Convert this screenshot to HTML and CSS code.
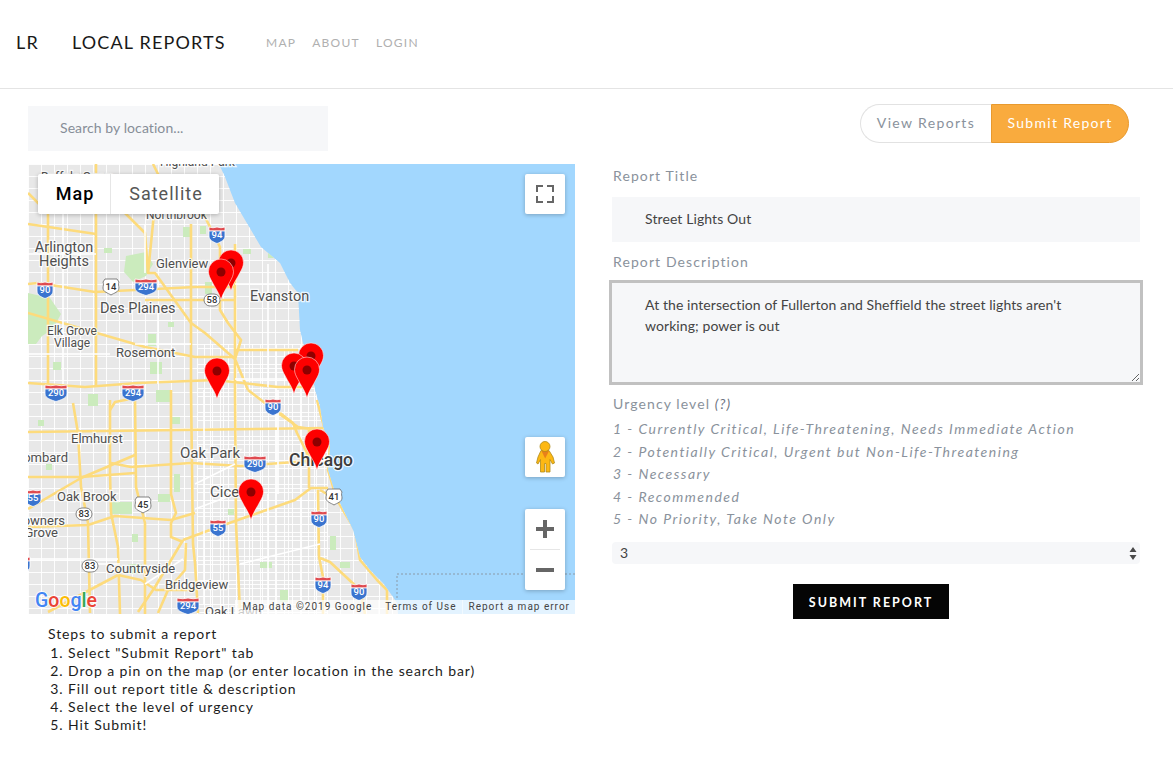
FILE: index.html
```html
<!DOCTYPE html>
<html lang="en">
<head>
<meta charset="utf-8">
<title>Local Reports</title>
<link rel="stylesheet" href="styles.css">
</head>
<body>
<header class="topbar">
  <span class="brand-mark">LR</span>
  <span class="brand-name">LOCAL REPORTS</span>
  <nav class="nav">
    <a class="nav-link">MAP</a>
    <a class="nav-link">ABOUT</a>
    <a class="nav-link">LOGIN</a>
  </nav>
</header>
<main class="content">
  <section class="left">
    <input class="search" type="text" placeholder="Search by location...">
    <div class="map">
      <svg class="map-canvas" viewBox="0 0 547 450" width="547" height="450" xmlns="http://www.w3.org/2000/svg">
        <defs>
          <pattern id="grid" width="13" height="12" patternUnits="userSpaceOnUse">
            <path d="M0 .5H13M.5 0V12" class="street-fine"/>
          </pattern>
          <pattern id="gridcity" width="8" height="8" patternUnits="userSpaceOnUse">
            <path d="M0 .5H8M.5 0V8" class="street-fine"/>
          </pattern>
          <clipPath id="landclip">
            <path d="M0 0H191L197 13L207 39L233 83L252 99L262 119L270 129L272 166L275 179L282 200L287 226L292 243L295 263L302 283L300 306L307 329L325 366L332 393L342 406L355 419L365 433L369 439L370 450H0Z"/>
          </clipPath>
          <symbol id="pin" viewBox="-1 -1 27 43" overflow="visible">
            <path class="pin-body" d="M12.5 41C11 34 6 28 3.5 22.5C1.5 19 0 16 0 12.5A12.5 12.5 0 1 1 25 12.5C25 16 23.5 19 21.5 22.5C19 28 14 34 12.5 41Z"/>
            <circle class="pin-dot" cx="12.5" cy="13" r="4.5"/>
          </symbol>
          <g id="i2">
            <path class="shield-red" d="M-8 -8Q-4 -6.5 0 -8Q4 -6.5 8 -8V-4H-8Z"/>
            <path class="shield-blue" d="M-8 -4H8V1C8 5 4 7 0 8.5C-4 7 -8 5 -8 1Z"/>
          </g>
          <g id="i3">
            <path class="shield-red" d="M-11 -8Q-5 -6.5 0 -8Q5 -6.5 11 -8V-4H-11Z"/>
            <path class="shield-blue" d="M-11 -4H11V1C11 5 5 7 0 8.5C-5 7 -11 5 -11 1Z"/>
          </g>
          <path id="us" class="shield-us" d="M-6 -8H6L8 -5C7 -3 8 -1 8 1C8 5 3 6 0 8C-3 6 -8 5 -8 1C-8 -1 -7 -3 -8 -5Z"/>
          <rect id="st" class="shield-us" x="-8" y="-6" width="16" height="12" rx="6"/>
        </defs>
        <rect class="water" width="547" height="450"/>
        <g clip-path="url(#landclip)">
          <rect class="land" width="547" height="450"/>
          <rect width="370" height="450" fill="url(#grid)"/>
          <rect x="170" y="180" width="130" height="270" fill="url(#gridcity)"/>
          <g class="park">
            <path d="M0 129L22 134L33 150L25 165L14 172L8 180H0Z"/>
            <path d="M98 92L118 88L125 100L118 112L105 118L96 108Z"/>
            <rect x="155" y="63" width="8" height="10"/>
            <rect x="172" y="62" width="6" height="8"/>
            <rect x="215" y="85" width="8" height="5"/>
            <rect x="76" y="84" width="8" height="5"/>
            <rect x="120" y="170" width="8" height="12"/>
            <rect x="140" y="158" width="6" height="5"/>
            <rect x="177" y="118" width="7" height="12"/>
            <rect x="195" y="110" width="10" height="6"/>
            <rect x="25" y="198" width="8" height="8"/>
            <rect x="122" y="198" width="12" height="12"/>
            <rect x="60" y="230" width="10" height="12"/>
            <rect x="128" y="226" width="14" height="12"/>
            <rect x="144" y="253" width="8" height="7"/>
            <rect x="84" y="338" width="20" height="12"/>
            <rect x="130" y="330" width="12" height="8"/>
            <rect x="146" y="310" width="6" height="18"/>
            <rect x="10" y="256" width="6" height="6"/>
            <rect x="18" y="300" width="6" height="6"/>
            <rect x="232" y="398" width="12" height="6"/>
            <rect x="252" y="426" width="8" height="12"/>
            <rect x="302" y="372" width="6" height="14"/>
            <rect x="312" y="398" width="10" height="6"/>
            <rect x="104" y="370" width="6" height="8"/>
            <rect x="100" y="400" width="14" height="10"/>
            <rect x="200" y="345" width="6" height="6"/>
            <rect x="272" y="150" width="6" height="5"/>
            <rect x="240" y="88" width="10" height="6"/>
          </g>
          <g class="road">
            <path d="M0 268L297 264"/>
            <path d="M0 345L53 314L107 291"/>
            <path d="M83 299L103 303L163 299L213 302L267 298L293 296"/>
            <path d="M0 313H53L107 309"/>
            <path d="M45 239L50 269L53 323L60 359L62 449"/>
            <path d="M82 236V309L83 349L90 383L92 450"/>
            <path d="M82 246L87 238L107 234L108 323L117 359V450"/>
            <path d="M143 226V330L148 349L143 359V373L155 378"/>
            <path d="M163 60V226L165 380L167 399L170 449"/>
            <path d="M207 80V226L208 359L212 449"/>
            <path d="M0 363L60 361L87 352L143 356L167 349"/>
            <path d="M155 376L190 363L267 336L283 324H300"/>
            <path d="M155 376L127 423L110 448"/>
            <path d="M20 448L90 411L113 416L128 426H167"/>
            <path d="M158 379L157 406L140 426L130 449"/>
            <path d="M281 266V324"/>
            <path d="M290 326L291 393L295 413V450"/>
            <path d="M292 394L302 398L332 426L337 450"/>
            <path d="M292 326L309 336L327 366L332 396L349 416L359 426V450"/>
            <path d="M289 236L295 259L302 283L300 306L309 336"/>
            <path d="M220 226L250 249L270 263L290 266"/>
            <path d="M252 249L265 259L269 269L279 289L280 300"/>
            <path d="M97 49L117 69L120 109L127 109L163 159L177 169L207 195L220 226"/>
            <path d="M0 120L10 119L67 128L167 123H207"/>
            <path d="M117 136H207"/>
            <path d="M207 186H270"/>
            <path d="M0 149L117 183L167 193H207"/>
            <path d="M68 0V223"/>
            <path d="M20 49V226"/>
            <path d="M0 29L20 49"/>
            <path d="M163 13L177 53L192 83V146L200 159L213 176L207 195"/>
            <path d="M0 219L57 223L110 219L187 216L250 223L278 223"/>
            <path d="M120 109L130 10L125 0"/>
            <path d="M0 60L68 70"/>
          </g>
          <g class="street">
            <path d="M0 90H68M0 190H82M107 180H163M207 120L270 120M207 215H260M0 395H90M167 320L207 300M167 345L207 330M212 400L292 380M117 420L155 395M60 400H92"/>
            <path d="M117 60V109M35 49V220M130 140V220M240 100V223M250 226V330M176 226V440M240 330V450"/>
          </g>
        </g>
        <path class="boundary" d="M547 410H369V436"/>
        <g class="place">
          <text class="s12" x="132" y="2">Highland Park</text>
          <text class="s12" x="13" y="17">Buffalo Grove</text>
          <text class="s12" x="118" y="55">Northbrook</text>
          <text class="s14 mid" x="36" y="88">Arlington</text>
          <text class="s14 mid" x="36" y="102">Heights</text>
          <text class="s13" x="128" y="104">Glenview</text>
          <text class="s14" x="222" y="137">Evanston</text>
          <text class="s14" x="72" y="149">Des Plaines</text>
          <text class="s12 mid" x="44" y="171">Elk Grove</text>
          <text class="s12 mid" x="44" y="183">Village</text>
          <text class="s13" x="88" y="193">Rosemont</text>
          <text class="s13" x="43" y="279">Elmhurst</text>
          <text class="s13 end" x="40" y="298">Lombard</text>
          <text class="s15" x="152" y="294">Oak Park</text>
          <text class="s15" x="182" y="333">Cicero</text>
          <text class="s13" x="29" y="337">Oak Brook</text>
          <text class="s13 end" x="37" y="361">Downers</text>
          <text class="s13 end" x="30" y="373">Grove</text>
          <text class="s13" x="78" y="409">Countryside</text>
          <text class="s13" x="137" y="425">Bridgeview</text>
          <text class="s13" x="177" y="452">Oak Lawn</text>
          <text class="s17" x="261" y="302">Chicago</text>
        </g>
        <g class="shields">
          <use href="#i2" x="189" y="71"/><text x="189" y="74">94</text>
          <use href="#i2" x="17" y="126"/><text x="17" y="129">90</text>
          <use href="#i3" x="118" y="123"/><text x="118" y="126">294</text>
          <use href="#us" x="83" y="123"/><text class="dark" x="83" y="126">14</text>
          <use href="#st" x="184" y="136"/><text class="dark" x="184" y="139">58</text>
          <use href="#i3" x="28" y="229"/><text x="28" y="232">290</text>
          <use href="#i3" x="105" y="229"/><text x="105" y="232">294</text>
          <use href="#i2" x="245" y="243"/><text x="245" y="246">90</text>
          <use href="#i3" x="227" y="300"/><text x="227" y="303">290</text>
          <use href="#i2" x="5" y="334"/><text x="5" y="337">55</text>
          <use href="#i2" x="190" y="364"/><text x="190" y="367">55</text>
          <use href="#us" x="115" y="341"/><text class="dark" x="115" y="344">45</text>
          <use href="#st" x="56" y="350"/><text class="dark" x="56" y="353">83</text>
          <use href="#st" x="62" y="402"/><text class="dark" x="62" y="405">83</text>
          <use href="#i3" x="160" y="442"/><text x="160" y="445">294</text>
          <use href="#i2" x="291" y="355"/><text x="291" y="358">90</text>
          <use href="#i2" x="295" y="421"/><text x="295" y="424">94</text>
          <use href="#i2" x="331" y="428"/><text x="331" y="431">90</text>
          <use href="#us" x="306" y="333"/><text class="dark" x="306" y="336">41</text>
          <use href="#i2" x="-6" y="401"/>
        </g>
        <use href="#pin" x="189.5" y="85" width="27" height="43"/>
        <use href="#pin" x="179.5" y="94" width="27" height="43"/>
        <use href="#pin" x="175.5" y="193" width="27" height="43"/>
        <use href="#pin" x="269.5" y="178" width="27" height="43"/>
        <use href="#pin" x="252.5" y="188" width="27" height="43"/>
        <use href="#pin" x="265.5" y="192" width="27" height="43"/>
        <use href="#pin" x="275.5" y="264" width="27" height="43"/>
        <use href="#pin" x="209.5" y="314" width="27" height="43"/>
        <text class="google" x="7" y="443"><tspan class="g-blue">G</tspan><tspan class="g-red">o</tspan><tspan class="g-yellow">o</tspan><tspan class="g-blue">g</tspan><tspan class="g-green">l</tspan><tspan class="g-red">e</tspan></text>
      </svg>

      <div class="map-type">
        <span class="map-type-btn is-on">Map</span>
        <span class="map-type-btn">Satellite</span>
      </div>
      <button class="ctl ctl-full" aria-label="Toggle fullscreen">
        <svg width="40" height="40" viewBox="0 0 40 40"><path class="ctl-line" d="M12 18V12H18M22 12H28V18M28 22V28H22M18 28H12V22"/></svg>
      </button>
      <button class="ctl ctl-peg" aria-label="Street View">
        <svg width="40" height="40" viewBox="0 0 40 40">
          <path class="peg-body" d="M16 13.5H24L28 20L29.5 26L27.5 27L25 22.5V35H21V26.5H19.5V35H15.5V22.5L13 27L11.5 26L13 20Z"/>
          <path class="peg-vest" d="M16.5 14H24L20.2 21.5Z"/>
          <circle class="peg-body" cx="20" cy="9.5" r="5"/>
        </svg>
      </button>
      <div class="ctl ctl-zoom">
        <svg width="40" height="81" viewBox="0 0 40 81">
          <path class="zoom-line" d="M11 20H29M20 11V29M11 61H29"/>
          <path class="zoom-sep" d="M5 40.5H35"/>
        </svg>
      </div>
      <div class="attr">
        <span class="attr-item attr-data">Map data ©2019 Google</span>
        <span class="attr-item attr-terms">Terms of Use</span>
        <span class="attr-item attr-error">Report a map error</span>
      </div>
    </div>
    <div class="steps">
      <div>Steps to submit a report</div>
      <ol class="steps-list">
        <li>Select "Submit Report" tab</li>
        <li>Drop a pin on the map (or enter location in the search bar)</li>
        <li>Fill out report title &amp; description</li>
        <li>Select the level of urgency</li>
        <li>Hit Submit!</li>
      </ol>
    </div>
  </section>
  <section class="right">
    <div class="toggle-row">
      <div class="toggle">
        <button class="toggle-btn">View Reports</button>
        <button class="toggle-btn is-active">Submit Report</button>
      </div>
    </div>
    <form class="form">
      <label class="label label-title">Report Title</label>
      <input class="field" type="text" value="Street Lights Out">
      <label class="label label-desc">Report Description</label>
      <textarea class="area">At the intersection of Fullerton and Sheffield the street lights aren't working; power is out</textarea>
      <label class="label label-urg">Urgency level <em>(?)</em></label>
      <ul class="levels">
        <li>1 - Currently Critical, Life-Threatening, Needs Immediate Action</li>
        <li>2 - Potentially Critical, Urgent but Non-Life-Threatening</li>
        <li>3 - Necessary</li>
        <li>4 - Recommended</li>
        <li>5 - No Priority, Take Note Only</li>
      </ul>
      <div class="select-wrap">
        <select class="select">
          <option>1</option><option>2</option><option selected>3</option><option>4</option><option>5</option>
        </select>
        <svg class="select-arrows" width="8" height="13" viewBox="0 0 8 13"><path d="M4 0L7.5 5H.5ZM.5 8H7.5L4 13Z"/></svg>
      </div>
      <div class="submit-row">
        <button class="submit" type="button">SUBMIT REPORT</button>
      </div>
    </form>
  </section>
</main>
</body>
</html>
```

FILE: styles.css
```css
* { box-sizing: border-box; }
html, body { margin: 0; padding: 0; }
body {
  background: #fff;
  color: #111;
  font-family: "Lato", "Noto Sans", sans-serif;
  font-size: 14px;
  letter-spacing: 1px;
  overflow: hidden;
}
.topbar {
  height: 89px;
  border-bottom: 1px solid #e4e4e4;
  display: flex;
  align-items: center;
  padding: 0 0 4px 16px;
}
.brand-mark, .brand-name {
  font-size: 18px;
  color: #181818;
  letter-spacing: 1.15px;
}
.brand-mark { width: 56px; }
.brand-name { width: 194px; }
.nav { display: flex; gap: 16px; }
.nav-link { font-size: 12px; color: #b0b0b0; letter-spacing: 1.25px; }

.content {
  display: grid;
  grid-template-columns: 612px 528px;
}
.left { padding: 17px 0 0 28px; }
.search {
  display: block;
  width: 300px;
  height: 45px;
  border: 0;
  outline: 0;
  background: #f6f7f9;
  padding: 0 0 2px 32px;
  font: inherit;
  letter-spacing: .08px;
}
.search::placeholder { color: #868e98; opacity: 1; }

.map {
  position: relative;
  width: 547px;
  height: 450px;
  margin-top: 13px;
  overflow: hidden;
}
.map-canvas { display: block; }
.water { fill: #a2d7fe; }
.land { fill: #e8e8e8; }
.street-fine { stroke: #fff; stroke-width: 1; fill: none; opacity: .9; }
.park { fill: #cbebbd; }
.road { fill: none; stroke: #fddb7c; stroke-width: 2.6; stroke-linejoin: round; }
.street { fill: none; stroke: #fff; stroke-width: 1.6; }
.boundary { fill: none; stroke: #8a9aa8; stroke-width: 1; stroke-dasharray: 2 2; }
.place text {
  font-family: "Roboto", sans-serif;
  letter-spacing: 0;
  fill: #4f4f4f;
  stroke: #fff;
  stroke-width: 2.5;
  stroke-opacity: .8;
  paint-order: stroke;
}
.place .s12 { font-size: 12px; }
.place .s13 { font-size: 13px; }
.place .s14 { font-size: 14.5px; }
.place .s15 { font-size: 15px; }
.place .s17 { font-size: 17.5px; font-weight: 500; fill: #3d3d3d; }
.place .mid { text-anchor: middle; }
.place .end { text-anchor: end; }
.shield-red { fill: #df4a4f; stroke: #fff; stroke-width: .8; }
.shield-blue { fill: #3a74cf; stroke: #fff; stroke-width: .8; }
.shield-us { fill: #fff; stroke: #666; stroke-width: .8; }
.shields text {
  font-family: "Roboto", sans-serif;
  font-size: 9.5px;
  font-weight: 500;
  letter-spacing: 0;
  text-anchor: middle;
  fill: #fff;
}
.shields text.dark { fill: #333; }
.pin-body { fill: #fe0000; stroke: #fff; stroke-opacity: .5; stroke-width: 1; }
.pin-dot { fill: #8e0000; }
.google {
  font-family: "Roboto", sans-serif;
  font-size: 19.5px;
  font-weight: 500;
  letter-spacing: 0;
  stroke: #fff;
  stroke-width: 2;
  stroke-opacity: .8;
  paint-order: stroke;
}
.g-blue { fill: #4285f4; }
.g-red { fill: #ea4335; }
.g-yellow { fill: #fbbc05; }
.g-green { fill: #34a853; }

.map-type {
  position: absolute;
  left: 10px;
  top: 10px;
  width: 181px;
  height: 40px;
  display: flex;
  background: #fff;
  border-radius: 2px;
  box-shadow: 0 1px 4px rgba(0, 0, 0, .25);
  font-family: "Roboto", sans-serif;
  font-size: 18px;
}
.map-type-btn {
  display: flex;
  align-items: center;
  justify-content: center;
  color: #565656;
  flex: 1;
  padding: 0 0 2px 2px;
}
.map-type-btn.is-on {
  flex: 0 0 73px;
  color: #000;
  font-weight: 500;
  border-right: 1px solid #e6e6e6;
}
.ctl {
  position: absolute;
  left: 497px;
  width: 40px;
  padding: 0;
  border: 0;
  background: #fff;
  border-radius: 2px;
  box-shadow: 0 1px 4px rgba(0, 0, 0, .25);
}
.ctl svg { display: block; }
.ctl-full { top: 10px; height: 40px; }
.ctl-peg { top: 273px; height: 40px; }
.ctl-zoom { top: 345px; height: 81px; }
.ctl-line { fill: none; stroke: #666; stroke-width: 2; }
.zoom-line { fill: none; stroke: #666; stroke-width: 4; }
.zoom-sep { fill: none; stroke: #e6e6e6; stroke-width: 1; }
.peg-body { fill: #fdb813; stroke: #b08a1a; stroke-width: .8; }
.peg-vest { fill: #e8801a; }
.attr {
  position: absolute;
  right: 0;
  bottom: 0;
  height: 14px;
  display: flex;
  font-family: "Roboto", sans-serif;
  font-size: 10px;
  line-height: 14px;
  color: #444;
}
.attr-item {
  padding: 0 6px;
  background: rgba(255, 255, 255, .7);
  border-left: 1px solid rgba(255, 255, 255, .5);
  white-space: nowrap;
}
.attr-terms, .attr-error { padding-right: 5px; }
.steps {
  margin-top: 11px;
  padding-left: 20px;
  line-height: 18px;
  color: #1c1c1c;
  letter-spacing: .9px;
}
.steps-list { margin: 1px 0 0; padding-left: 20px; }

.right { padding-top: 15px; }
.toggle-row { display: flex; justify-content: flex-end; padding-right: 11px; }
.toggle { display: flex; height: 39px; }
.toggle-btn {
  font: inherit;
  letter-spacing: 1.35px;
  height: 39px;
  width: 131px;
  background: #fff;
  color: #8a929c;
  border: 1px solid #e2e2e2;
  border-right: 0;
  border-radius: 20px 0 0 20px;
  padding: 0 0 2px;
}
.toggle-btn.is-active {
  width: 138px;
  background: #f9ab3e;
  color: #fff;
  border: 1px solid #e89a2e;
  border-radius: 0 20px 20px 0;
  letter-spacing: 1.3px;
}
.form { display: flex; flex-direction: column; }
.label { color: #8a929c; line-height: 21px; display: block; padding-left: 1px; letter-spacing: 1.1px; }
.label em { font-style: italic; color: #6b7280; }
.label-title { margin-top: 22px; }
.label-desc { margin-top: 9px; }
.label-urg { margin-top: 8px; }
.field {
  margin-top: 11px;
  height: 45px;
  border: 0;
  outline: 0;
  background: #f6f7f9;
  padding: 0 0 2px 33px;
  font: inherit;
  letter-spacing: .1px;
  color: #444;
}
.area {
  display: block;
  margin: 8px -3px 0;
  width: 534px;
  height: 105px;
  border: 3px solid #c1c1c1;
  outline: 0;
  background: #f6f7f9;
  padding: 11px 60px 0 33px;
  font: inherit;
  letter-spacing: .08px;
  line-height: 21px;
  color: #444;
}
.levels {
  list-style: none;
  margin: 4px 0 0;
  padding: 0 0 0 1px;
  font-style: italic;
  color: #8a929c;
  line-height: 22.5px;
  letter-spacing: 1.48px;
}
.select-wrap { position: relative; margin-top: 11.5px; height: 22px; }
.select {
  display: block;
  width: 100%;
  height: 22px;
  appearance: none;
  -webkit-appearance: none;
  border: 0;
  outline: 0;
  border-radius: 4px;
  background: #f6f7f9;
  padding: 0 0 2px 8px;
  font: inherit;
  color: #444;
}
.select-arrows { position: absolute; right: 3px; top: 5px; fill: #4a4a4a; }
.submit-row { display: flex; justify-content: center; padding-right: 10px; margin-top: 20px; }
.submit {
  width: 156px;
  height: 35px;
  border: 0;
  background: #050505;
  color: #fff;
  font: inherit;
  font-size: 12.5px;
  font-weight: 700;
  letter-spacing: 2px;
  padding: 1px 0 0;
}
```
